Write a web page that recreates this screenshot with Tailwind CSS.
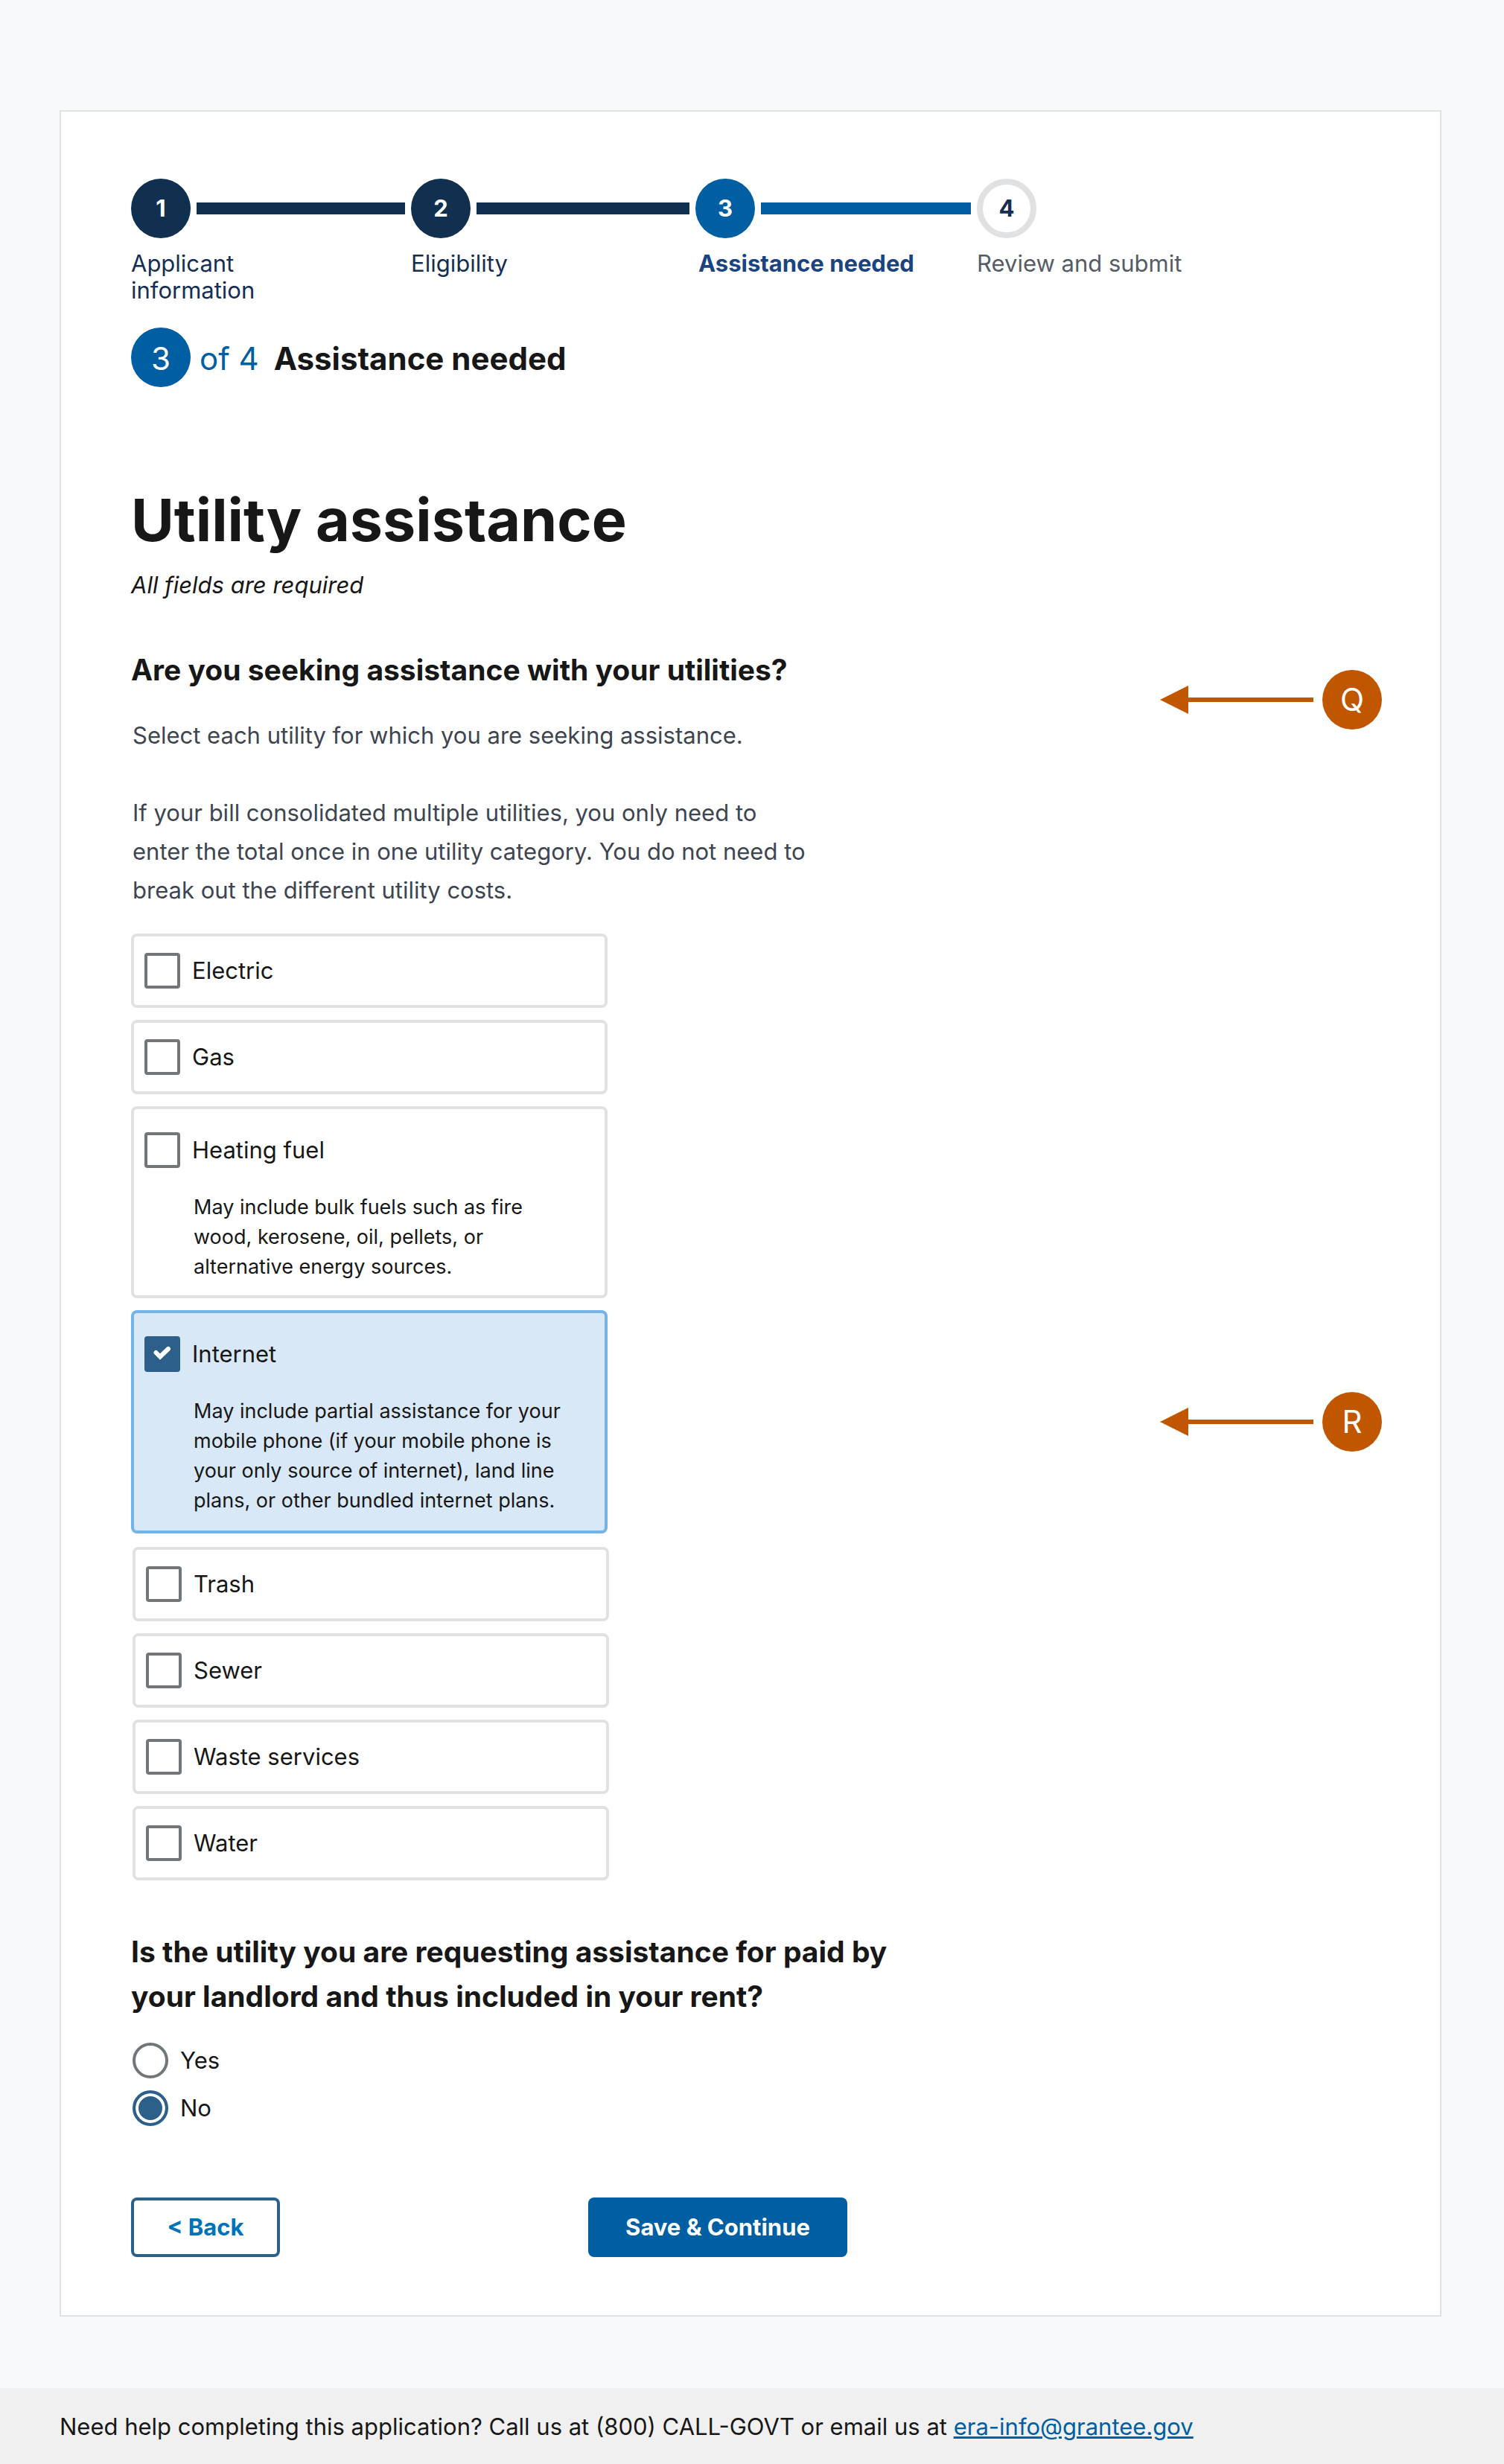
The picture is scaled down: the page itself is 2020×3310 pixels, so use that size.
<!DOCTYPE html>
<html lang="en">
<head>
<meta charset="utf-8">
<meta name="viewport" content="width=device-width, initial-scale=1">
<title>Utility assistance</title>
<script src="https://cdn.jsdelivr.net/npm/@tailwindcss/browser@4"></script>
</head>
<body class="flex min-h-screen flex-col bg-[#f8f9fb] font-['Inter',sans-serif] text-[31px] leading-[52px] text-[#171717]">
<main class="mt-[148px] mr-[84px] mb-24 ml-20 grow border-2 border-[#dfe1e2] bg-white pt-[90px] pr-[78px] pb-[78px] pl-[94px]">

  <!-- Step indicator -->
  <ol class="grid grid-cols-[376px_382px_378px_1fr] leading-9 text-[#162e51]">
    <li>
      <div class="flex items-center gap-2 pr-2">
        <span class="flex size-20 shrink-0 items-center justify-center rounded-full bg-[#112f4e] font-bold text-white">1</span>
        <span class="h-4 grow bg-[#112f4e]"></span>
      </div>
      <p class="mt-4 max-w-52">Applicant information</p>
    </li>
    <li>
      <div class="flex items-center gap-2 pr-2">
        <span class="flex size-20 shrink-0 items-center justify-center rounded-full bg-[#112f4e] font-bold text-white">2</span>
        <span class="h-4 grow bg-[#112f4e]"></span>
      </div>
      <p class="mt-4">Eligibility</p>
    </li>
    <li aria-current="step">
      <div class="flex items-center gap-2 pr-2">
        <span class="flex size-20 shrink-0 items-center justify-center rounded-full bg-[#005ea2] font-bold text-white">3</span>
        <span class="h-4 grow bg-[#005ea2]"></span>
      </div>
      <p class="mt-4 pl-1 font-bold text-[#1a4480]">Assistance needed</p>
    </li>
    <li>
      <span class="flex size-20 items-center justify-center rounded-full border-8 border-[#dfe1e2] font-bold">4</span>
      <p class="mt-4 text-[#565c65]">Review and submit</p>
    </li>
  </ol>

  <h2 class="mt-8 flex items-center text-[42px] leading-[48px]">
    <span class="flex size-20 items-center justify-center rounded-full bg-[#005ea2] pt-1 text-white">3</span>
    <span class="ml-3 pt-1 text-[#005ea2]">of 4</span>
    <span class="ml-5 pt-1 font-bold">Assistance needed</span>
  </h2>

  <h1 class="mt-[130px] text-[79px] leading-[96px] font-bold">Utility assistance</h1>
  <p class="mt-[14px] italic">All fields are required</p>

  <form>
    <div role="group" aria-labelledby="utilities-question">
      <div class="mt-[58px] flex items-start justify-between">
        <div>
          <h3 id="utilities-question" class="text-[39px] leading-[60px] font-bold">Are you seeking assistance with your utilities?</h3>
          <p class="mt-8 pl-0.5 text-[#3d4551]">Select each utility for which you are seeking assistance.</p>
          <p class="mt-[52px] max-w-[920px] pl-0.5 text-[#3d4551]">If your bill consolidated multiple utilities, you only need to enter the total once in one utility category. You do not need to break out the different utility costs.</p>
        </div>
        <div class="mt-[30px] flex shrink-0 items-center gap-3">
          <svg class="h-[38px] w-[206px] text-[#c05600]" viewBox="0 0 206 38" fill="currentColor" aria-hidden="true"><path d="M0 19 38 0V16H206V22H38V38Z"/></svg>
          <span class="flex size-20 items-center justify-center rounded-full bg-[#c05600] text-[42px] text-white">Q</span>
        </div>
      </div>

      <ul class="mt-8 flex flex-col gap-4">
        <li class="w-[640px] rounded-lg border-4 border-[#dfe1e2]">
          <label class="flex items-center gap-4 py-[22px] pl-[14px] leading-[48px]">
            <input type="checkbox" class="size-12 appearance-none rounded-sm border-4 border-[#71767a] bg-white">Electric
          </label>
        </li>
        <li class="w-[640px] rounded-lg border-4 border-[#dfe1e2]">
          <label class="flex items-center gap-4 py-[22px] pl-[14px] leading-[48px]">
            <input type="checkbox" class="size-12 appearance-none rounded-sm border-4 border-[#71767a] bg-white">Gas
          </label>
        </li>
        <li class="w-[640px] rounded-lg border-4 border-[#dfe1e2] pt-[31px] pb-[18px]">
          <label class="flex items-center gap-4 pl-[14px] leading-[48px]">
            <input type="checkbox" aria-describedby="heating-note" class="size-12 appearance-none rounded-sm border-4 border-[#71767a] bg-white">Heating fuel
          </label>
          <p id="heating-note" class="mt-[33px] pr-12 pl-20 text-[27px] leading-10">May include bulk fuels such as fire wood, kerosene, oil, pellets, or alternative energy sources.</p>
        </li>
        <li class="flex items-center justify-between">
          <div class="w-[640px] rounded-lg border-4 border-[#73b3e7] bg-[#d9e8f6] pt-[31px] pb-5">
            <label class="flex items-center gap-4 pl-[14px] leading-[48px]">
              <span class="grid size-12">
                <input type="checkbox" checked aria-describedby="internet-note" class="col-start-1 row-start-1 size-12 appearance-none rounded-sm bg-[#2c608a]">
                <svg class="pointer-events-none col-start-1 row-start-1 size-12" viewBox="0 0 48 48" fill="none" stroke="#fff" stroke-width="6" stroke-linecap="round" aria-hidden="true"><path d="M15.500 22 21 27.500 32 17"/></svg>
              </span>Internet
            </label>
            <p id="internet-note" class="mt-[33px] pr-12 pl-20 text-[27px] leading-10">May include partial assistance for your mobile phone (if your mobile phone is your only source of internet), land line plans, or other bundled internet plans.</p>
          </div>
          <div class="flex shrink-0 items-center gap-3">
            <svg class="h-[38px] w-[206px] text-[#c05600]" viewBox="0 0 206 38" fill="currentColor" aria-hidden="true"><path d="M0 19 38 0V16H206V22H38V38Z"/></svg>
            <span class="flex size-20 items-center justify-center rounded-full bg-[#c05600] text-[42px] text-white">R</span>
          </div>
        </li>
      </ul>
      <ul class="mt-[18px] ml-0.5 flex flex-col gap-4">
        <li class="w-[640px] rounded-lg border-4 border-[#dfe1e2]">
          <label class="flex items-center gap-4 py-[22px] pl-[14px] leading-[48px]">
            <input type="checkbox" class="size-12 appearance-none rounded-sm border-4 border-[#71767a] bg-white">Trash
          </label>
        </li>
        <li class="w-[640px] rounded-lg border-4 border-[#dfe1e2]">
          <label class="flex items-center gap-4 py-[22px] pl-[14px] leading-[48px]">
            <input type="checkbox" class="size-12 appearance-none rounded-sm border-4 border-[#71767a] bg-white">Sewer
          </label>
        </li>
        <li class="w-[640px] rounded-lg border-4 border-[#dfe1e2]">
          <label class="flex items-center gap-4 py-[22px] pl-[14px] leading-[48px]">
            <input type="checkbox" class="size-12 appearance-none rounded-sm border-4 border-[#71767a] bg-white">Waste services
          </label>
        </li>
        <li class="w-[640px] rounded-lg border-4 border-[#dfe1e2]">
          <label class="flex items-center gap-4 py-[22px] pl-[14px] leading-[48px]">
            <input type="checkbox" class="size-12 appearance-none rounded-sm border-4 border-[#71767a] bg-white">Water
          </label>
        </li>
      </ul>
    </div>

    <fieldset class="mt-[66px]">
      <legend class="max-w-[1060px] text-[39px] leading-[60px] font-bold">Is the utility you are requesting assistance for paid by your landlord and thus included in your rent?</legend>
      <div class="mt-8 ml-0.5 flex flex-col items-start gap-4 leading-[48px]">
        <label class="flex items-center gap-4">
          <input type="radio" name="landlord" value="yes" class="size-12 appearance-none rounded-full border-4 border-[#71767a] bg-white">Yes
        </label>
        <label class="flex items-center gap-4">
          <input type="radio" name="landlord" value="no" checked class="size-12 appearance-none rounded-full border-4 border-[#2c608a] bg-[#2c608a] shadow-[inset_0_0_0_4px_#fff]">No
        </label>
      </div>
    </fieldset>

    <div class="mt-24 flex gap-[414px]">
      <button type="button" class="h-20 w-[200px] rounded-lg border-4 border-[#2c608a] font-bold text-[#0072b9]">&lt; Back</button>
      <button type="submit" class="h-20 w-[348px] rounded-lg bg-[#005ea2] font-bold text-white">Save &amp; Continue</button>
    </div>
  </form>
</main>

<footer class="bg-[#f0f0f0] px-20 pt-[26px] pb-6">
  <p>Need help completing this application? Call us at (800) CALL-GOVT or email us at <a href="mailto:era-info@grantee.gov" class="text-[#005ea2] underline">era-info@grantee.gov</a></p>
</footer>
</body>
</html>
